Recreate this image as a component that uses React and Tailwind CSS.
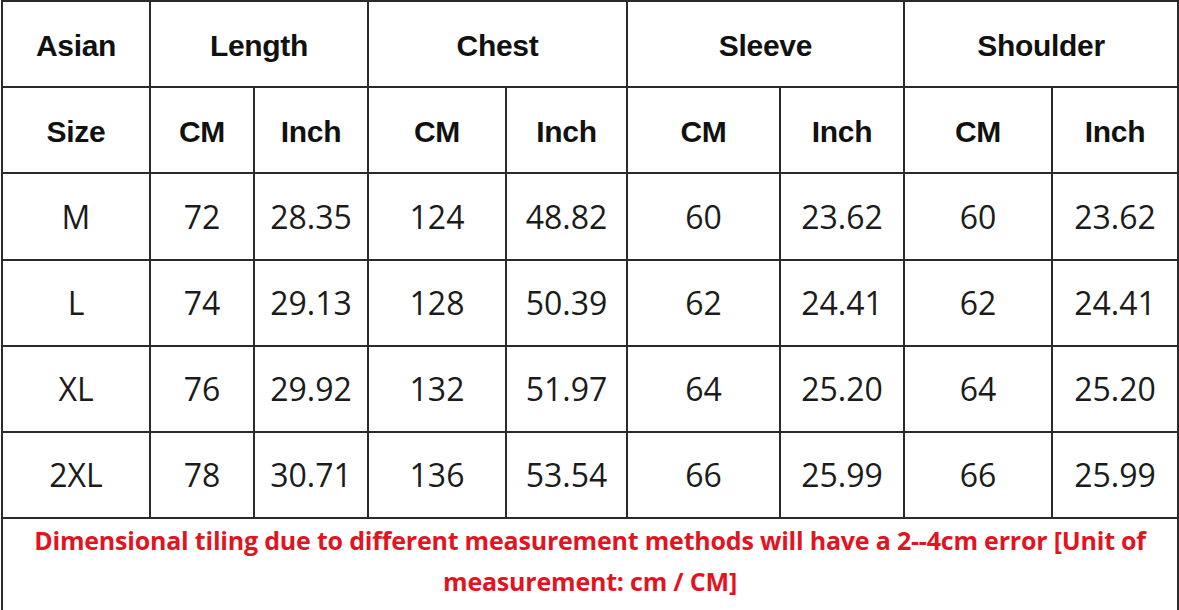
import React from "react";

const head = "flex items-center justify-center bg-white pt-[2px] text-[30px] font-bold text-[#111] tracking-[-0.3px] font-['Liberation_Sans',Arial,sans-serif]";
const cell = "flex items-center justify-center bg-white text-[32px] text-[#1b1b1b] font-['Open_Sans',sans-serif]";

const rows = [
  ["M", "72", "28.35", "124", "48.82", "60", "23.62", "60", "23.62"],
  ["L", "74", "29.13", "128", "50.39", "62", "24.41", "62", "24.41"],
  ["XL", "76", "29.92", "132", "51.97", "64", "25.20", "64", "25.20"],
  ["2XL", "78", "30.71", "136", "53.54", "66", "25.99", "66", "25.99"],
];

export default function App() {
  return (
    <div className="w-[1179px] h-[610px] overflow-hidden bg-white">
      <div className="ml-[1px] w-[1178px] bg-[#2a2a2a] px-[2px] pt-[2px]">
        <div className="grid grid-cols-[146px_102px_112px_136px_119px_151px_122px_146px_124px] grid-rows-[84px_84px_85px_84px_84px_84px_91px] gap-[2px]">
          <div className={head}>Asian</div>
          <div className={`${head} col-span-2`}>Length</div>
          <div className={`${head} col-span-2`}>Chest</div>
          <div className={`${head} col-span-2`}>Sleeve</div>
          <div className={`${head} col-span-2`}>Shoulder</div>

          <div className={head}>Size</div>
          <div className={head}>CM</div>
          <div className={head}>Inch</div>
          <div className={head}>CM</div>
          <div className={head}>Inch</div>
          <div className={head}>CM</div>
          <div className={head}>Inch</div>
          <div className={head}>CM</div>
          <div className={head}>Inch</div>

          {rows.map((r, i) =>
            r.map((v, j) => (
              <div key={`${i}-${j}`} className={cell}>
                {v}
              </div>
            ))
          )}

          <div className="col-span-9 bg-white pt-[1px] text-center text-[25px] leading-[41px] font-bold text-[#e3141f] tracking-[-0.2px] font-['Open_Sans',sans-serif]">
            Dimensional tiling due to different measurement methods will have a 2--4cm error [Unit of
            <br />
            measurement: cm / CM]
          </div>
        </div>
      </div>
    </div>
  );
}
